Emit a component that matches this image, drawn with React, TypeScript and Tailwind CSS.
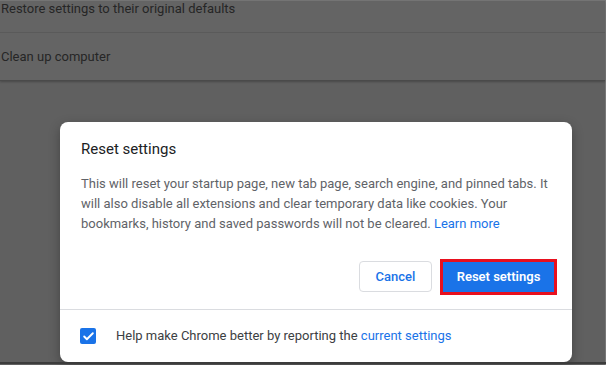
import { Check } from "lucide-react";

const rows = ["Restore settings to their original defaults", "Clean up computer"];

export default function App() {
  return (
    <div className="relative h-[365px] w-[606px] overflow-hidden bg-[#606060] font-['Roboto',sans-serif]">
      {/* page behind the modal scrim */}
      <div className="border-t border-[#767676] border-r border-r-[#787878] h-full">
        <div className="bg-[#646464] border-b border-[#4a4a4a] shadow-[0_1px_2px_rgba(0,0,0,0.25)]">
          {rows.map((label, i) => (
            <div
              key={label}
              className={
                i === 0
                  ? "h-[32px] border-b border-[#5a5a5a] pl-[1px] text-[13px] leading-[15px] text-[#262626]"
                  : "flex h-[47px] items-center pl-[1px] text-[13px] text-[#262626]"
              }
            >
              {label}
            </div>
          ))}
        </div>
      </div>

      {/* dialog */}
      <div className="absolute left-[60px] top-[122px] w-[512px] rounded-lg bg-white shadow-[0_4px_12px_rgba(0,0,0,0.3)]">
        <h2 className="px-[21px] pt-[17px] text-[15px] leading-[20px] text-[#202124]">Reset settings</h2>
        <p className="mt-[15px] px-[21px] text-[13px] leading-[20px] text-[#5f6368]">
          This will reset your startup page, new tab page, search engine, and pinned tabs. It
          <br />
          will also disable all extensions and clear temporary data like cookies. Your
          <br />
          bookmarks, history and saved passwords will not be cleared.{" "}
          <span className="text-[#1a73e8]">Learn more</span>
        </p>
        <div className="mt-[27px] flex items-center justify-end gap-[11px] pb-[17px] pr-[18px]">
          <button
            type="button"
            className="h-[31px] w-[73px] rounded-[4px] border border-[#dadce0] bg-white text-[13px] font-medium text-[#1a73e8]"
          >
            Cancel
          </button>
          <button
            type="button"
            className="h-[30px] w-[111px] bg-[#1a73e8] text-[13px] font-semibold text-white outline-[3px] outline-solid outline-[#e8101e]"
          >
            Reset settings
          </button>
        </div>
        <div className="flex h-[53px] items-center gap-[20px] border-t border-[#dadce0] px-[20px]">
          <span className="flex h-[16px] w-[16px] items-center justify-center rounded-[2px] bg-[#1a73e8]">
            <Check className="h-[13px] w-[13px] text-white" strokeWidth={3.5} />
          </span>
          <span className="text-[13px] text-[#3c4043]">
            Help make Chrome better by reporting the <span className="text-[#1a73e8]">current settings</span>
          </span>
        </div>
      </div>

      <div className="absolute bottom-[1px] left-0 h-[2px] w-full bg-[#3c3c3c]" />
    </div>
  );
}
